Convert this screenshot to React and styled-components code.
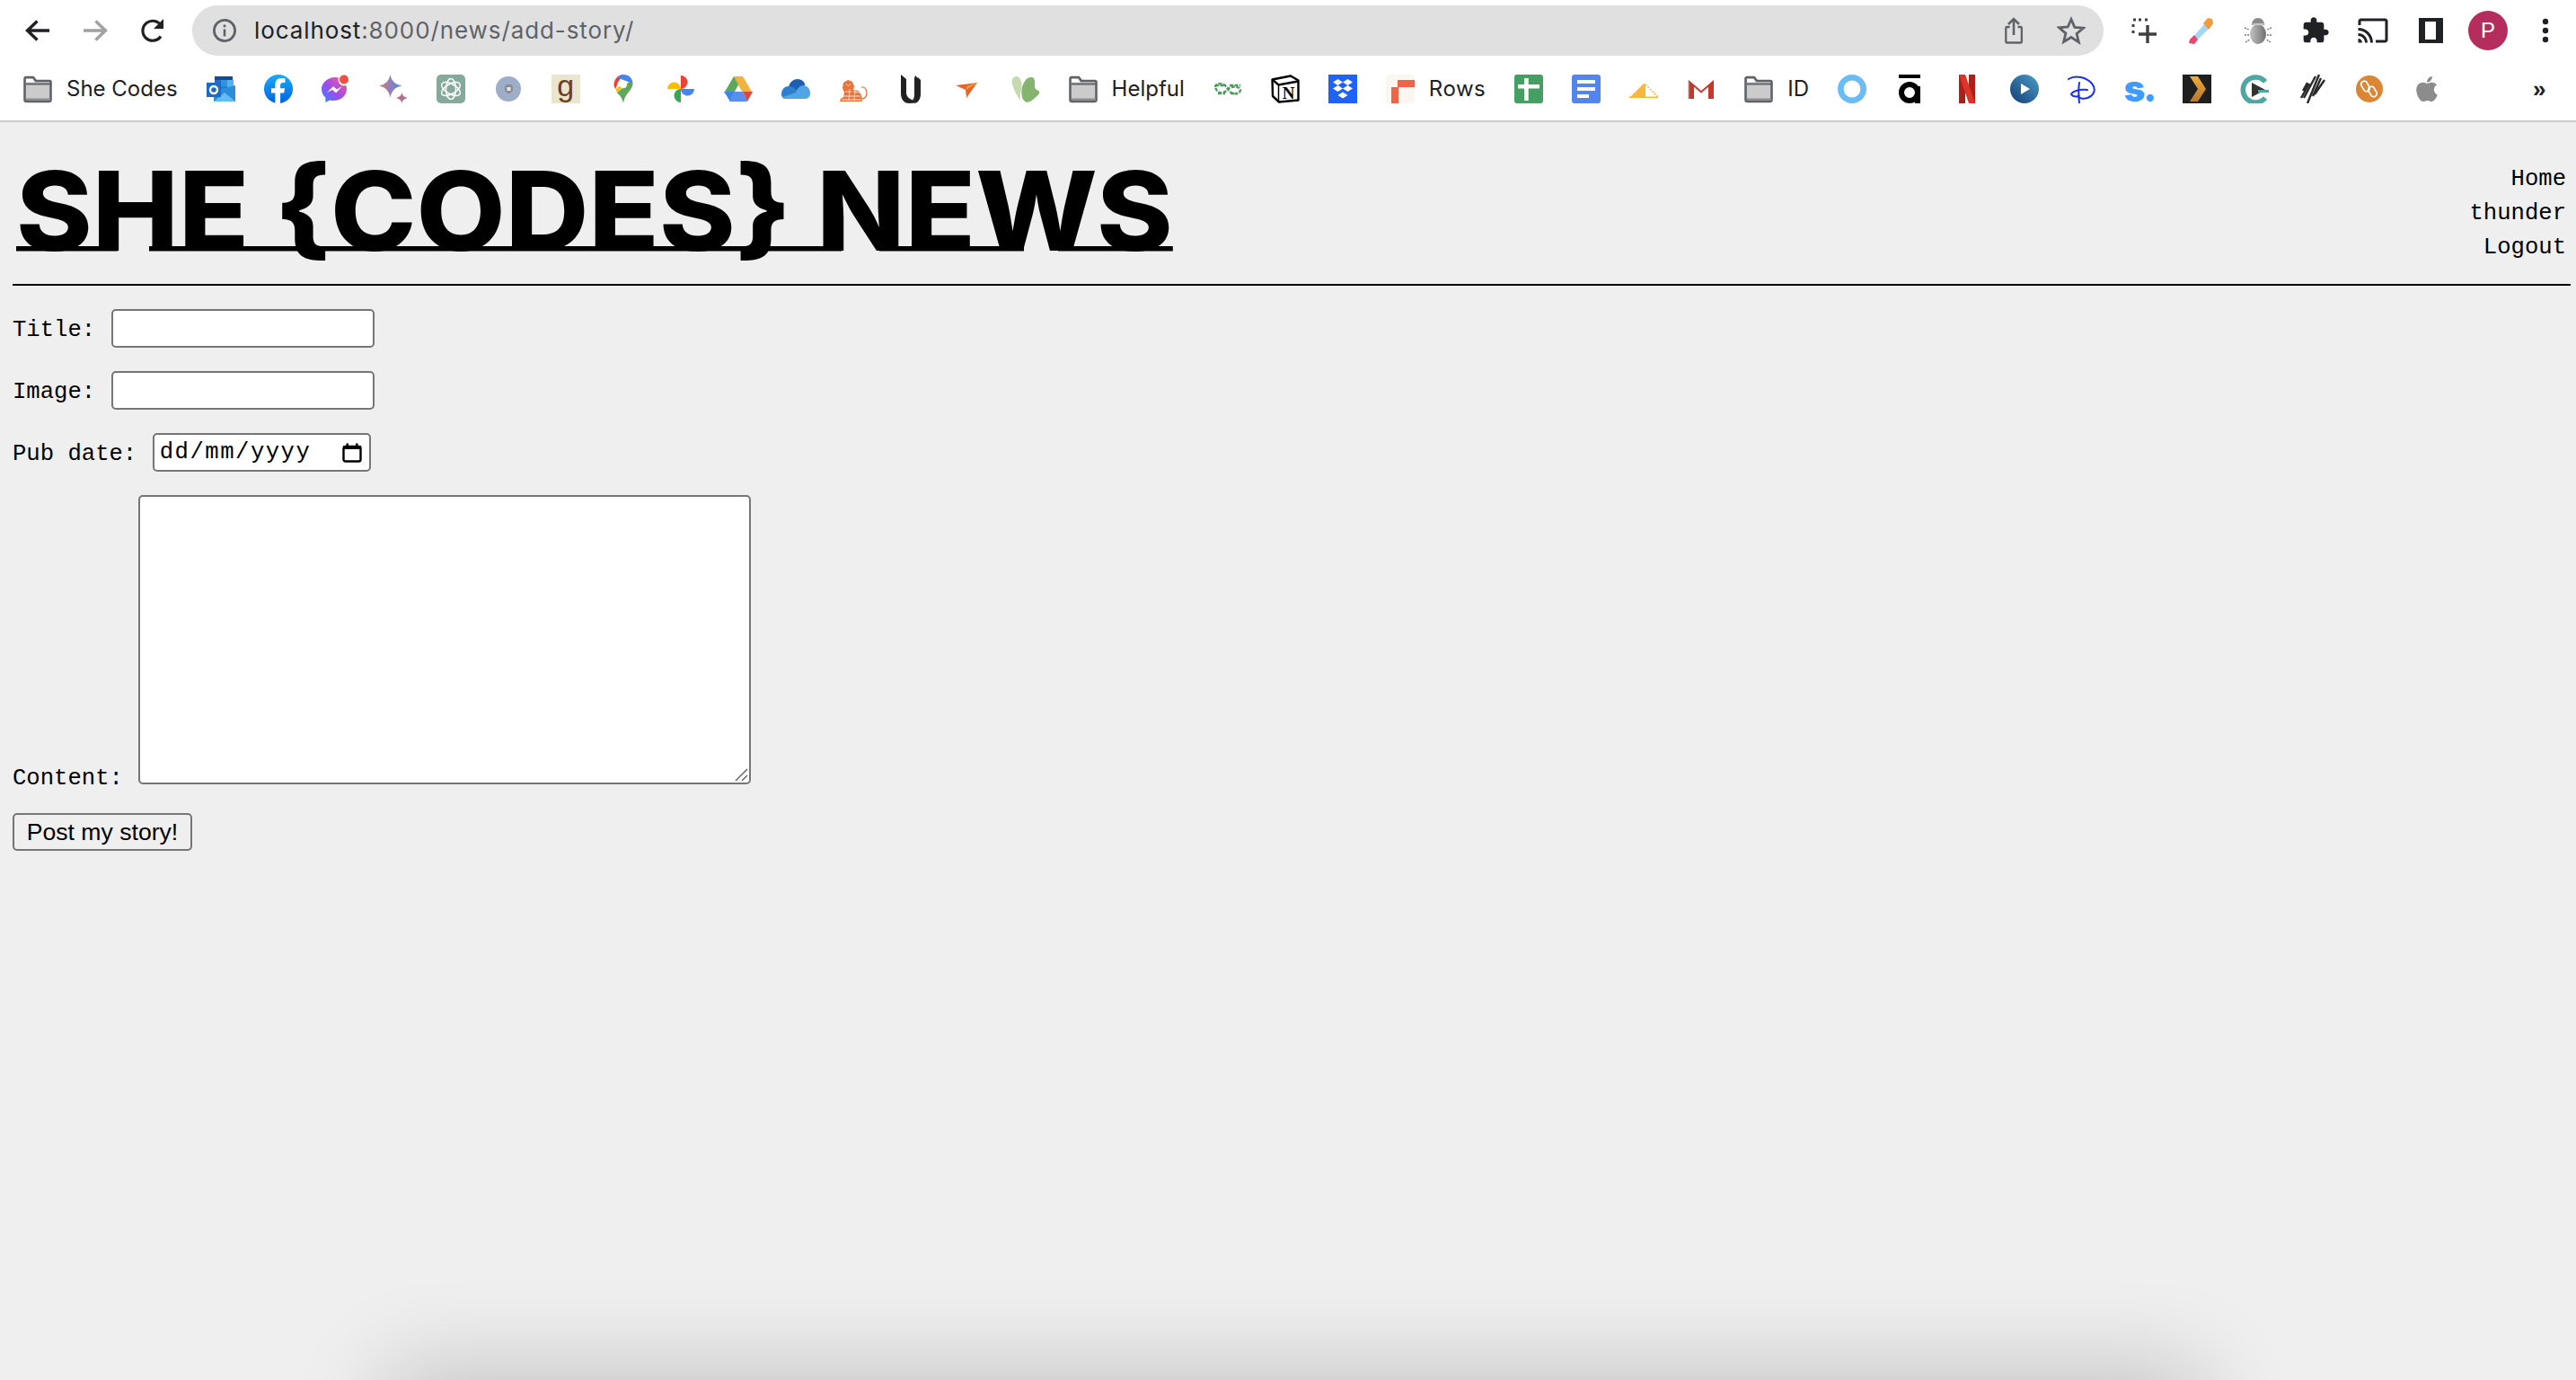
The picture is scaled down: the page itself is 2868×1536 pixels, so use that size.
import React from "react";
import styled, { createGlobalStyle } from "styled-components";
import { FaApple } from "react-icons/fa";

const Global = createGlobalStyle`
  html, body { margin: 0; padding: 0; height: 100%; overflow: hidden; background: #efefef; }
  #root { height: 100%; }
  * { box-sizing: border-box; }
`;

const Page = styled.div`
  display: flex;
  flex-direction: column;
  height: 1536px;
  background: #efefef;
  color: #000;
`;

const Chrome = styled.header`
  height: 136px;
  background: #fff;
  border-bottom: 2px solid #cbcbcb;
  display: flex;
  flex-direction: column;
`;

const TopRow = styled.div`
  height: 68px;
  display: flex;
  align-items: center;
  padding: 0 0 0 10px;
`;

const NavButton = styled.div`
  width: 64px;
  height: 56px;
  display: flex;
  align-items: center;
  justify-content: center;
  flex: none;
`;

const Omnibox = styled.div`
  width: 2128px;
  height: 56px;
  margin-left: 12px;
  border-radius: 28px;
  background: #e0e0e0;
  display: flex;
  align-items: center;
  padding: 0 4px 0 22px;
  flex: none;
`;

const UrlText = styled.div`
  margin-left: 19px;
  font: 26px/1 Inter, "Liberation Sans", Arial, sans-serif;
  letter-spacing: 0.9px;
  color: #5f6368;
  flex: 1;
  b { font-weight: 400; color: #202124; }
`;

const OmniAction = styled.div`
  width: 64px;
  height: 56px;
  display: flex;
  align-items: center;
  justify-content: center;
  flex: none;
`;

const Extensions = styled.div`
  display: flex;
  align-items: center;
  padding-left: 12px;
`;

const Avatar = styled.div`
  width: 44px;
  height: 44px;
  margin: 0 10px;
  border-radius: 50%;
  background: #b52d5c;
  color: #fff;
  font: 24px/44px "Liberation Sans", Arial, sans-serif;
  text-align: center;
  flex: none;
`;

const BookmarkBar = styled.nav`
  flex: 1;
  display: flex;
  align-items: center;
  padding-left: 10px;
  padding-bottom: 4px;
`;

const Bookmark = styled.div`
  display: flex;
  align-items: center;
  gap: 16px;
  padding: 0 16px;
  height: 48px;
  flex: none;
  font: 24px/1 Inter, "Liberation Sans", Arial, sans-serif;
  letter-spacing: ${(p) => p.$track || 0}px;
  color: #202124;
`;

const Overflow = styled.div`
  margin-left: auto;
  width: 48px;
  font: 700 26px/1 "Liberation Sans", Arial, sans-serif;
  color: #202124;
`;

const Icon = styled.svg`
  width: ${(p) => p.$size || 32}px;
  height: ${(p) => p.$size || 32}px;
  flex: none;
  display: block;
`;

const Content = styled.main`
  flex: 1;
  padding: 0 6px 0 14px;
  display: flex;
  flex-direction: column;
`;

const SiteHeader = styled.div`
  height: 182px;
  display: flex;
  justify-content: space-between;
  align-items: flex-start;
  border-bottom: 2px solid #000;
`;

const Logo = styled.a`
  display: block;
  width: fit-content;
  margin: 29px 0 0 4px;
  font: 800 122px/140px Inter, "Liberation Sans", sans-serif;
  white-space: nowrap;
  color: #000;
  transform: scaleX(1.053);
  transform-origin: left center;
  background: linear-gradient(
      90deg,
      #000 8.8%,
      transparent 8.8% 11.5%,
      #000 11.5% 71.35%,
      transparent 71.35% 74.6%,
      #000 74.6% 87.1%,
      transparent 87.1% 90.1%,
      #000 90.1%
    )
    0 109px / 100% 5.5px no-repeat;
`;

const SiteNav = styled.div`
  margin: 45px 5px 0 0;
  display: flex;
  flex-direction: column;
  align-items: flex-end;
  font: 25.6px/38px "Liberation Mono", "Courier New", monospace;
`;

const Form = styled.form`
  display: flex;
  flex-direction: column;
  align-items: flex-start;
  gap: 26px;
  padding-top: 26px;
`;

const Field = styled.div`
  display: flex;
  align-items: ${(p) => (p.$bottom ? "flex-end" : "center")};
  gap: 17.5px;
`;

const Label = styled.label`
  font: 25.6px/30px "Liberation Mono", "Courier New", monospace;
  white-space: nowrap;
  position: relative;
  top: ${(p) => (p.$bottom ? "9px" : "2px")};
`;

const TextInput = styled.input`
  width: 293px;
  height: 43px;
  border: 2px solid #767676;
  border-radius: 5px;
  background: #fff;
  padding: 0 6px;
  font: 25.6px "Liberation Sans", sans-serif;
  outline: none;
`;

const DateField = styled.div`
  width: 243px;
  height: 43px;
  border: 2px solid #767676;
  border-radius: 5px;
  background: #fff;
  display: flex;
  align-items: center;
  justify-content: space-between;
  padding: 0 8px 0 6px;
  font: 25.6px/1 "Liberation Mono", "Courier New", monospace;
  letter-spacing: 1.5px;
`;

const AreaWrap = styled.div`
  position: relative;
  display: flex;
`;

const Area = styled.textarea`
  width: 682px;
  height: 322px;
  border: 2px solid #767676;
  border-radius: 5px;
  background: #fff;
  resize: none;
  outline: none;
`;

const Grip = styled.svg`
  position: absolute;
  right: 3px;
  bottom: 3px;
  width: 16px;
  height: 16px;
`;

const Submit = styled.button`
  width: 200px;
  height: 42px;
  margin-top: 6px;
  padding: 0;
  border: 2px solid #767676;
  border-radius: 5px;
  background: #efefef;
  color: #000;
  font: 26.6px/1 "Liberation Sans", Arial, sans-serif;
`;

const BottomShadow = styled.div`
  position: fixed;
  left: 430px;
  top: 1536px;
  width: 2023px;
  height: 200px;
  box-shadow: 0 -14px 100px rgba(0, 0, 0, 0.18);
`;

const GlyphTile = styled.span`
  width: 32px;
  height: 32px;
  flex: none;
  display: flex;
  align-items: ${(p) => p.$align || "center"};
  justify-content: center;
  background: ${(p) => p.$bg || "transparent"};
  color: ${(p) => p.$fg};
  font: ${(p) => p.$font};
  letter-spacing: ${(p) => p.$track || 0}px;
`;

/* ---------- browser toolbar glyphs ---------- */
const Back = ({ c = "#202124", flip }) => (
  <Icon viewBox="0 0 32 32" style={flip ? { transform: "scaleX(-1)" } : undefined}>
    <path d="M29 16H6M15.5 5.5 4.5 16l11 10.5" fill="none" stroke={c} strokeWidth="3.4" />
  </Icon>
);
const Reload = () => (
  <Icon viewBox="0 0 32 32">
    <path d="M25 22.5a11 11 0 1 1 .6-11.5" fill="none" stroke="#202124" strokeWidth="3.2" />
    <path d="M28 3v11H17z" fill="#202124" />
  </Icon>
);
const Info = () => (
  <Icon viewBox="0 0 28 28" $size={28}>
    <circle cx="14" cy="14" r="11.6" fill="none" stroke="#5f6368" strokeWidth="2.8" />
    <rect x="12.7" y="12.5" width="2.6" height="8" fill="#5f6368" />
    <rect x="12.7" y="7.5" width="2.6" height="2.8" fill="#5f6368" />
  </Icon>
);
const Share = () => (
  <Icon viewBox="0 0 32 32">
    <path d="M11 13H7.5A1.5 1.5 0 0 0 6 14.5V29a1.5 1.5 0 0 0 1.5 1.5h17A1.5 1.5 0 0 0 26 29V14.5A1.5 1.5 0 0 0 24.5 13H21" fill="none" stroke="#5f6368" strokeWidth="2.6" transform="translate(2 -1) scale(.88 1)" />
    <path d="M16 21V3M10 9l6-6 6 6" fill="none" stroke="#5f6368" strokeWidth="2.6" />
  </Icon>
);
const Star = () => (
  <Icon viewBox="0 0 32 32">
    <path d="M16 3.5l3.8 8.900 9.700.8-7.400 6.300 2.300 9.400L16 23.500l-8.400 5 2.300-9.400-7.400-6.300 9.700-.8z" fill="none" stroke="#5f6368" strokeWidth="2.8" />
  </Icon>
);
const Capture = () => (
  <Icon viewBox="0 0 32 32">
    <path d="M5 4h3M11 4h3M18 4h3M5 9v3M5 16v3" stroke="#3c4043" strokeWidth="3" />
    <path d="M21 10v20M11 20h20" stroke="#3c4043" strokeWidth="3.4" />
  </Icon>
);
const Dropper = () => (
  <Icon viewBox="0 0 32 32">
    <path d="M20 9l5 5L11 28l-4-4z" fill="#a6d4f5" />
    <path d="M9 21l4 5-4 5-6-1 1-4z" fill="#e8456f" />
    <path d="M19 8l5-6 5 1 1 5-5 7z" fill="#f39a3c" />
  </Icon>
);
const Bug = () => (
  <Icon viewBox="0 0 32 32">
    <defs>
      <linearGradient id="bug" x1="0" x2="1"><stop offset="0" stopColor="#c2c2c2" /><stop offset="1" stopColor="#6f6f6f" /></linearGradient>
    </defs>
    <ellipse cx="16" cy="20" rx="9" ry="11" fill="url(#bug)" />
    <path d="M9 10c0-5 3-8 7-8s7 3 7 8z" fill="#8a8a8a" />
    <path d="M10 9h12" stroke="#dcdcdc" strokeWidth="1.5" />
    <path d="M1 13l5 2M1 21h5M2 29l5-3M31 13l-5 2M31 21h-5M30 29l-5-3" stroke="#777" strokeWidth="1.4" strokeDasharray="2 1" />
  </Icon>
);
const Puzzle = () => (
  <Icon viewBox="0 0 24 24">
    <path fill="#202124" d="M20.5 11H19V7c0-1.100-.9-2-2-2h-4V3.500C13 2.120 11.880 1 10.500 1S8 2.120 8 3.500V5H4c-1.100 0-1.990.9-1.990 2v3.800H3.500c1.490 0 2.700 1.210 2.700 2.700s-1.210 2.700-2.700 2.700H2V20c0 1.100.9 2 2 2h3.800v-1.500c0-1.490 1.210-2.700 2.700-2.700 1.490 0 2.700 1.210 2.700 2.700V22H17c1.100 0 2-.9 2-2v-4h1.500c1.380 0 2.500-1.120 2.500-2.500S21.880 11 20.500 11z" />
  </Icon>
);
const Cast = () => (
  <Icon viewBox="0 0 24 24" $size={36}>
    <path fill="#202124" d="M21 3H3c-1.100 0-2 .9-2 2v3h2V5h18v14h-7v2h7c1.100 0 2-.9 2-2V5c0-1.100-.9-2-2-2zM1 18v3h3c0-1.660-1.340-3-3-3zm0-4v2c2.760 0 5 2.240 5 5h2c0-3.870-3.130-7-7-7zm0-4v2c4.970 0 9 4.030 9 9h2c0-6.080-4.930-11-11-11z" />
  </Icon>
);
const Sidebar = () => (
  <Icon viewBox="0 0 32 32">
    <path fillRule="evenodd" d="M3 2h27v28H3zM10 6v20h12V6z" fill="#202124" />
  </Icon>
);
const Dots = () => (
  <Icon viewBox="0 0 32 32">
    <circle cx="16" cy="6" r="3.2" fill="#202124" />
    <circle cx="16" cy="16" r="3.2" fill="#202124" />
    <circle cx="16" cy="26" r="3.2" fill="#202124" />
  </Icon>
);

/* ---------- bookmark favicons ---------- */
const Folder = () => (
  <Icon viewBox="0 0 32 32">
    <path d="M1.5 7V28a2 2 0 0 0 2 2h25a2 2 0 0 0 2-2V8.500a1.500 1.500 0 0 0-1.500-1.500H14L11 3H3a1.500 1.500 0 0 0-1.500 1.500z" fill="#cbcbcb" stroke="#5f6368" strokeWidth="2.6" />
    <path d="M3 10.500h27" stroke="#5f6368" strokeWidth="2" />
    <path d="M3 5h7l2.500 3.500H3z" fill="#fff" />
    <path d="M3 26.500h27V29H3z" fill="#8d8d8d" />
  </Icon>
);
const Outlook = () => (
  <Icon viewBox="0 0 32 32">
    <path d="M9 2h20v11H9z" fill="#0f4c9e" />
    <path d="M9 6h7v7H9z" fill="#1f6fc6" /><path d="M16 6h7v7h-7z" fill="#2c94de" /><path d="M23 6h7v7h-7z" fill="#50b3ef" />
    <path d="M16 13h7v7h-7z" fill="#1f7fd0" /><path d="M23 13h9v7h-9z" fill="#50b3ef" />
    <path d="M8 18l24-6v18H8z" fill="#2a8edb" />
    <path d="M8 30l12-10 12 10z" fill="#63bdf2" />
    <path d="M0 9h16v16H0z" fill="#1f69c1" />
    <circle cx="8" cy="17" r="4" fill="none" stroke="#fff" strokeWidth="2.4" />
  </Icon>
);
const Facebook = () => (
  <Icon viewBox="0 0 32 32">
    <defs><linearGradient id="fb" x1="0" y1="0" x2="0" y2="1"><stop offset="0" stopColor="#18acfe" /><stop offset="1" stopColor="#0163e0" /></linearGradient></defs>
    <circle cx="16" cy="16" r="16" fill="url(#fb)" />
    <path fill="#fff" d="M22.200 20.600l.9-5.300h-5v-3.400c0-1.500.7-2.900 3-2.900h2.300V4.500s-2.100-.4-4.100-.4c-4.200 0-6.900 2.500-6.900 7.100v4.100H8v5.300h4.400V32h5.700V20.600z" />
  </Icon>
);
const Messenger = () => (
  <Icon viewBox="0 0 32 32">
    <defs><linearGradient id="ms" x1="0" y1="1" x2="1" y2="0"><stop offset="0" stopColor="#2c8cff" /><stop offset=".45" stopColor="#9b4cf0" /><stop offset="1" stopColor="#ff5a80" /></linearGradient></defs>
    <path d="M15 3C7.500 3 0 8.800 0 16c0 3.900 1.700 7.300 4.400 9.600V31l4.700-2.600c1.200.4 2.500.6 3.900.6 9 0 15-5.800 15-13S22.500 3 15 3z" fill="url(#ms)" />
    <path d="M6 20l7-7 4 3.500 6-3.500-7 7.500-4-3.500z" fill="#fff" />
    <circle cx="25" cy="6" r="6.500" fill="#fff" />
    <circle cx="25" cy="5.500" r="5" fill="#ef5140" />
  </Icon>
);
const Gemini = () => (
  <Icon viewBox="0 0 32 32">
    <defs><linearGradient id="gm" x1="0" x2="1"><stop offset="0" stopColor="#e07a5a" /><stop offset=".5" stopColor="#8f7fc0" /><stop offset="1" stopColor="#4d8fe0" /></linearGradient></defs>
    <path d="M12.500 0C14 7.500 18 11 25.500 12.500 18 14 14 18 12.500 25.500 11 18 7 14 0 12.500 7 11 11 7.500 12.500 0z" fill="url(#gm)" />
    <path d="M25.500 20C26 23 27.500 25 32 26c-4.500 1-6 3-6.500 6-.5-3-2.500-5-6.500-6 4-1 6-3 6.500-6z" fill="#b4708f" />
  </Icon>
);
const ChatGpt = () => (
  <Icon viewBox="0 0 32 32">
    <rect width="32" height="32" rx="5" fill="#85a99a" />
    <g fill="none" stroke="#fff" strokeWidth="1.5">
      <ellipse cx="16" cy="16" rx="5.500" ry="11.500" />
      <ellipse cx="16" cy="16" rx="5.500" ry="11.500" transform="rotate(60 16 16)" />
      <ellipse cx="16" cy="16" rx="5.500" ry="11.500" transform="rotate(120 16 16)" />
    </g>
  </Icon>
);
const Disc = () => (
  <Icon viewBox="0 0 32 32">
    <circle cx="16" cy="16" r="14" fill="#9eadc8" />
    <path d="M12 13l3-2h3l3 2v5l-3 3h-3l-3-3z" fill="#8b8b92" />
    <rect x="14.500" y="14" width="4" height="4" fill="#e8e8ec" />
  </Icon>
);
const Maps = () => (
  <Icon viewBox="0 0 32 32">
    <path d="M5.500 11.500C5.500 5.500 10 0 16 0l-6 8.500-2.500 7.500c-1.200-1.500-2-2.800-2-4.500z" fill="#ea4335" />
    <path d="M10 4c1.700-2.500 4-4 6-4 6 0 10.500 4 10.500 10L16 6z" fill="#4285f4" />
    <path d="M7.500 16l6-4 3 .5-7.500 8z" fill="#fbbc04" />
    <path d="M26.500 10c0 4-3 7.500-5 10-2.500 3-4.500 6-5.500 12-1-5-3-8.500-7-11.500l14-13z" fill="#5fa858" />
    <circle cx="16" cy="11" r="4.200" fill="#fff" />
  </Icon>
);
const Pinwheel = () => (
  <Icon viewBox="0 0 32 32">
    <path d="M16 16V1a7.500 7.500 0 0 1 0 15z" fill="#ea4335" />
    <path d="M16 16H1a7.500 7.500 0 0 1 15 0z" fill="#fbbc04" />
    <path d="M16 16v15a7.500 7.500 0 0 1 0-15z" fill="#34a853" />
    <path d="M16 16h15a7.500 7.500 0 0 1-15 0z" fill="#4285f4" />
  </Icon>
);
const Drive = () => (
  <Icon viewBox="0 0 32 32">
    <path d="M11 2h10l-9 17H1z" fill="#5aa85a" />
    <path d="M21 2l10 17H20L11 2z" fill="#f2b33d" />
    <path d="M0 19h12l-5 11z" fill="#3f84e8" />
    <path d="M6 30l5-11h10l5 11z" fill="#5a8eee" />
    <path d="M21 19h11l-6 11z" fill="#d94a3d" />
  </Icon>
);
const OneDrive = () => (
  <Icon viewBox="0 0 32 32">
    <path d="M8 14c1-6 6-9 10-9 4 0 7 2 8.500 6L16 22 6 18z" fill="#1d5fb0" />
    <path d="M0 22c0-5 3-9 8-9 2 0 4 .6 6 2l8 6 1 6H5c-3 0-5-2-5-5z" fill="#2e7fd0" />
    <path d="M16 20c1.500-5 5-8 8.500-8 4 0 7.500 3.500 7.500 9 0 3-2 6-5.500 6H5c-2 0-3.500-1-4-2z" fill="#4fa5e6" />
  </Icon>
);
const Lion = () => (
  <Icon viewBox="0 0 32 32">
    <path d="M1 30l1-3 3-2 1-5-2-5 1-6 5-3 5 2 2 5-1 4 6 1 3 5 1 7z" fill="#e8743a" />
    <path d="M25 27c4 0 6-3 6-7 0-4-3-7-6-6" fill="none" stroke="#e8743a" strokeWidth="1.3" />
    <path d="M8 10l2.500 3 2.500-3M7 19h7M16 19l8 1M5 24h19M3 28h22M12 16l-1 13M18 17l-1 12" stroke="#fbe4d4" strokeWidth="1" fill="none" />
  </Icon>
);
const UniFi = () => (
  <Icon viewBox="0 0 32 32">
    <path d="M5 0l6 5v15c0 3.500 2 6 5 7.500 2 1 5 1.500 5 1.500-2 2-4 3-7 3-6 0-9-5-9-11z" fill="#222" />
    <path d="M21 1l3 3v17c0 3.500-1 6-3 8-1.500 0-3-.6-3-.6 2-2 2-5 2-7.400V4z" fill="#222" />
    <path d="M24 3l3 3v16c0 4-1.500 7-4 9-2 1-5 1-7 .5 5-1 7-5 7-10z" fill="#222" />
  </Icon>
);
const Swoosh = () => (
  <Icon viewBox="0 0 32 32">
    <path d="M2 12l24-3-12 17-1-9z" fill="#e8652a" />
    <path d="M13 17L28 8 15 13z" fill="#f7a63a" />
  </Icon>
);
const Leaf = () => (
  <Icon viewBox="0 0 32 32">
    <path d="M6 2c-4 0-6 3-5 8 1 6 5 13 9 19-1-9 3-14 1-21-1-4-3-6-5-6z" fill="#c5dbaf" />
    <path d="M23 3c-6-1-9 5-11 11-1 5-1 11 2 15 3 3 7 2 11-2 3-3 7-5 6-8-1-2-5-2-5-6 0-3 1-9-3-10z" fill="#84b470" />
  </Icon>
);
const Geeks = () => (
  <Icon viewBox="0 0 32 32">
    <g fill="none" stroke="#4d9a5e" strokeWidth="2.4" strokeDasharray="4 1.500">
      <path d="M2 14c0-5 10-6 14 2 4 8 14 6 14 1-1-4-9-5-14-1-5 7-12 5-14-2z" />
      <path d="M2 12h12M18 12h12M5 21h8M19 21h8" />
    </g>
  </Icon>
);
const Notion = () => (
  <Icon viewBox="0 0 32 32">
    <path d="M1.500 5.500l20.500-4 8.500 5v22l-21.500 2-7-6.500z" fill="#fff" stroke="#000" strokeWidth="2.4" strokeLinejoin="round" />
    <path d="M2 6l6.500 5.500 22-4" fill="none" stroke="#000" strokeWidth="2.4" />
    <path d="M8.500 11.500v18" stroke="#000" strokeWidth="1.5" />
    <text x="19.500" y="27" textAnchor="middle" fontFamily="Liberation Serif, serif" fontWeight="700" fontSize="19">N</text>
  </Icon>
);
const Dropbox = () => (
  <Icon viewBox="0 0 32 32">
    <rect width="32" height="32" fill="#1f63f6" />
    <g fill="#fff">
      <path d="M10.500 5l5.500 3.500-5.500 3.500L5 8.500z" /><path d="M21.500 5L27 8.500 21.500 12 16 8.500z" />
      <path d="M10.500 12l5.500 3.500-5.500 3.500L5 15.500z" /><path d="M21.500 12l5.500 3.500-5.500 3.500-5.500-3.500z" />
      <path d="M16 19.500l5.500 3.500-5.500 3.500-5.500-3.500z" />
    </g>
  </Icon>
);
const Rows = () => (
  <Icon viewBox="0 0 32 32">
    <rect width="32" height="32" rx="5" fill="#faf7f0" />
    <path d="M13 6h19v8H14v18H6V14h7z" fill="#ef6448" />
  </Icon>
);
const Sheets = () => (
  <Icon viewBox="0 0 32 32">
    <rect width="32" height="32" rx="3" fill="#459f62" />
    <rect x="4" y="11" width="24" height="4.500" fill="#fff" />
    <rect x="11" y="4" width="4.700" height="25" fill="#fff" />
  </Icon>
);
const Docs = () => (
  <Icon viewBox="0 0 32 32">
    <rect width="32" height="32" rx="3" fill="#5286ee" />
    <path d="M6 6h20v4H6zM6 14h20v4H6zM6 22h13v4H6z" fill="#fff" />
  </Icon>
);
const Tent = () => (
  <Icon viewBox="0 0 32 32">
    <path d="M0 24.500h32V26H0z" fill="#f6b73c" />
    <path d="M0 26l16-16 2 1v15z" fill="#f6b73c" />
    <path d="M18 11l14 14" stroke="#f6b73c" strokeWidth="1.5" strokeDasharray="2 1.500" />
  </Icon>
);
const Gmail = () => (
  <Icon viewBox="0 0 32 32">
    <path d="M2 6l14 12L30 6v21h-6V14L16 21 8 14v13H2z" fill="#c5382c" />
    <path d="M8 14l8 7 8-7" fill="none" stroke="#e8d8d6" strokeWidth="1" />
    <path d="M2 6v21" stroke="#a8a8a8" strokeWidth="1" />
  </Icon>
);
const Ring = () => (
  <Icon viewBox="0 0 32 32">
    <circle cx="16" cy="16" r="12.700" fill="none" stroke="#6bbcf3" strokeWidth="6.6" />
  </Icon>
);
const AIcon = () => (
  <Icon viewBox="0 0 32 32">
    <rect x="4" y="0" width="24" height="4" fill="#000" />
    <circle cx="16" cy="20" r="9" fill="none" stroke="#000" strokeWidth="6" />
    <rect x="22" y="13" width="6" height="19" fill="#000" />
  </Icon>
);
const Netflix = () => (
  <Icon viewBox="0 0 32 32">
    <rect x="7" y="0" width="7" height="32" fill="#a8211b" />
    <rect x="18" y="0" width="7" height="32" fill="#a8211b" />
    <path d="M7 0h7l11 32h-7z" fill="#e0332a" />
  </Icon>
);
const Play = () => (
  <Icon viewBox="0 0 32 32">
    <defs><linearGradient id="pl" x1="0" y1="1" x2="1" y2="0"><stop offset="0" stopColor="#143c74" /><stop offset="1" stopColor="#4a9fc9" /></linearGradient></defs>
    <circle cx="16" cy="16" r="16" fill="url(#pl)" />
    <path d="M12 10l10 6-10 6z" fill="#fff" />
  </Icon>
);
const Disney = () => (
  <Icon viewBox="0 0 32 32">
    <path d="M1 5c8-5 20-2 26 5 5 6 3 13-5 16-5 1.500-9 0-10-1M13 9c-1 6-1 14 0 23M4 22c1-3 8-6 18-5M4 22c2 3 5 3 9 2" fill="none" stroke="#1a2dff" strokeWidth="2" strokeLinecap="round" />
  </Icon>
);
const Plex = () => (
  <Icon viewBox="0 0 32 32">
    <defs><linearGradient id="px" x1="0" y1="0" x2="0" y2="1"><stop offset="0" stopColor="#f0ae3a" /><stop offset="1" stopColor="#b5782a" /></linearGradient></defs>
    <rect width="32" height="32" fill="#1f1f1f" />
    <path d="M8 2h9l9 14-9 14H8l9-14z" fill="url(#px)" />
  </Icon>
);
const Catch = () => (
  <Icon viewBox="0 0 32 32">
    <path d="M28 8A14 14 0 1 0 28 26" fill="none" stroke="#4fa7a3" strokeWidth="5.6" />
    <path d="M13 9l15 8-15 8z" fill="#333" />
    <path d="M20 17h12v3H20z" fill="#4fa7a3" />
  </Icon>
);
const Abc = () => (
  <Icon viewBox="0 0 32 32">
    <path d="M11 9L6 18M13 10L4 26M20 2L7 26M24 0L11 32M26 4L17 24M30 6L19 22" stroke="#2a2a2a" strokeWidth="2.4" />
  </Icon>
);
const LinkDot = () => (
  <Icon viewBox="0 0 32 32">
    <circle cx="16" cy="16" r="15" fill="#dc8535" />
    <g fill="none" stroke="#fff" strokeWidth="1.8">
      <rect x="8" y="7" width="7" height="12" rx="3.500" transform="rotate(-30 11.500 13)" />
      <rect x="16" y="13" width="7" height="12" rx="3.500" transform="rotate(-30 19.500 19)" />
    </g>
  </Icon>
);
const Apple = () => <FaApple size={32} color="#8c8c8c" style={{ flex: "none" }} />;

const Calendar = () => (
  <Icon viewBox="0 0 22 22" $size={22}>
    <rect x="1.5" y="4" width="19" height="16.500" rx="2" fill="none" stroke="#000" strokeWidth="2.4" />
    <rect x="1" y="3" width="20" height="4" fill="#000" />
    <rect x="4.5" y="0.500" width="2.500" height="3" fill="#000" />
    <rect x="15" y="0.500" width="2.500" height="3" fill="#000" />
  </Icon>
);

const leadIcons = [Outlook, Facebook, Messenger, Gemini, ChatGpt, Disc];
const midIcons = [Maps, Pinwheel, Drive, OneDrive, Lion, UniFi, Swoosh, Leaf];
const tailIcons = [Ring, AIcon, Netflix, Play, Disney];
const finalIcons = [Plex, Catch, Abc, LinkDot, Apple];

const Plain = ({ list }) =>
  list.map((I, i) => (
    <Bookmark key={i}>
      <I />
    </Bookmark>
  ));

export default function App() {
  return (
    <Page>
      <Global />
      <Chrome>
        <TopRow>
          <NavButton><Back /></NavButton>
          <NavButton><Back c="#a0a1a3" flip /></NavButton>
          <NavButton><Reload /></NavButton>
          <Omnibox>
            <Info />
            <UrlText><b>localhost</b>:8000/news/add-story/</UrlText>
            <OmniAction><Share /></OmniAction>
            <OmniAction><Star /></OmniAction>
          </Omnibox>
          <Extensions>
            <NavButton><Capture /></NavButton>
            <NavButton><Dropper /></NavButton>
            <NavButton><Bug /></NavButton>
            <NavButton><Puzzle /></NavButton>
            <NavButton><Cast /></NavButton>
            <NavButton><Sidebar /></NavButton>
            <Avatar>P</Avatar>
            <NavButton><Dots /></NavButton>
          </Extensions>
        </TopRow>
        <BookmarkBar>
          <Bookmark><Folder />She Codes</Bookmark>
          <Plain list={leadIcons} />
          <Bookmark>
            <GlyphTile $bg="#e9e5cf" $fg="#6b3f1d" $align="flex-start" $font='400 34px/24px "Liberation Sans", sans-serif'>g</GlyphTile>
          </Bookmark>
          <Plain list={midIcons} />
          <Bookmark><Folder />Helpful</Bookmark>
          <Bookmark><Geeks /></Bookmark>
          <Bookmark><Notion /></Bookmark>
          <Bookmark><Dropbox /></Bookmark>
          <Bookmark $track={0.5}><Rows />Rows</Bookmark>
          <Bookmark><Sheets /></Bookmark>
          <Bookmark><Docs /></Bookmark>
          <Bookmark><Tent /></Bookmark>
          <Bookmark><Gmail /></Bookmark>
          <Bookmark><Folder />ID</Bookmark>
          <Plain list={tailIcons} />
          <Bookmark>
            <GlyphTile $fg="#3f9bff" $track={-2} $font='900 40px/30px Inter, "Liberation Sans", sans-serif'>s.</GlyphTile>
          </Bookmark>
          <Plain list={finalIcons} />
          <Overflow>»</Overflow>
        </BookmarkBar>
      </Chrome>
      <Content>
        <SiteHeader>
          <Logo>SHE {"{CODES}"} NEWS</Logo>
          <SiteNav>
            <span>Home</span>
            <span>thunder</span>
            <span>Logout</span>
          </SiteNav>
        </SiteHeader>
        <Form>
          <Field>
            <Label>Title:</Label>
            <TextInput type="text" />
          </Field>
          <Field>
            <Label>Image:</Label>
            <TextInput type="text" />
          </Field>
          <Field>
            <Label>Pub date:</Label>
            <DateField>
              dd/mm/yyyy
              <Calendar />
            </DateField>
          </Field>
          <Field $bottom>
            <Label $bottom>Content:</Label>
            <AreaWrap>
              <Area />
              <Grip viewBox="0 0 16 16">
                <path d="M2 15L15 2M9 15l6-6" stroke="#6a6a6a" strokeWidth="1.5" />
              </Grip>
            </AreaWrap>
          </Field>
          <Submit type="button">Post my story!</Submit>
        </Form>
      </Content>
      <BottomShadow />
    </Page>
  );
}
